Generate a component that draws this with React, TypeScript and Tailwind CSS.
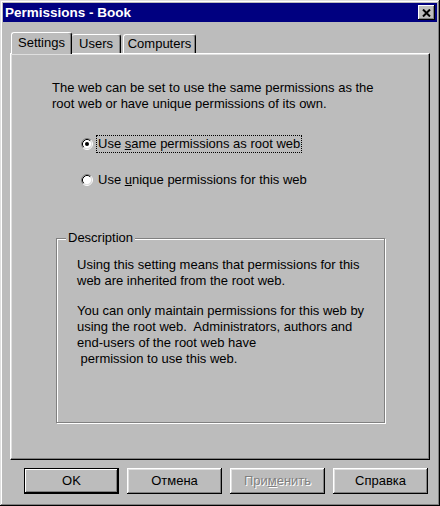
import React from "react";

const Radio = ({ checked }: { checked?: boolean }) => (
  <svg width="12" height="12" viewBox="0 0 12 12" className="shrink-0">
    <circle cx="6" cy="6" r="4.5" fill="#fff" />
    <path d="M2.11 9.89 A5.5 5.5 0 0 1 9.89 2.11" fill="none" stroke="#808080" />
    <path d="M9.89 2.11 A5.5 5.5 0 0 1 2.11 9.89" fill="none" stroke="#fff" />
    <path d="M2.82 9.18 A4.5 4.5 0 0 1 9.18 2.82" fill="none" stroke="#000" />
    <path d="M9.18 2.82 A4.5 4.5 0 0 1 2.82 9.18" fill="none" stroke="#dfdfdf" />
    {checked && <circle cx="6" cy="6" r="2" fill="#000" />}
  </svg>
);

const Btn = ({
  children,
  isDefault,
}: {
  children: React.ReactNode;
  isDefault?: boolean;
}) => (
  <div
    className={
      "flex h-[26px] w-[95px] items-center justify-center bg-[#bcbcbc] " +
      (isDefault
        ? "border border-black shadow-[inset_-1px_-1px_#000,inset_1px_1px_#fff,inset_-2px_-2px_#808080]"
        : "shadow-[inset_-1px_-1px_#000,inset_1px_1px_#fff,inset_-2px_-2px_#808080,inset_2px_2px_#dfdfdf]")
    }
  >
    {children}
  </div>
);

export default function App() {
  return (
    <div className="h-[506px] w-[440px] bg-[#bcbcbc] p-[3px] font-['Liberation_Sans',Arial,sans-serif] text-[13px] leading-[16px] text-black shadow-[inset_-1px_-1px_#000,inset_1px_1px_#dfdfdf,inset_-2px_-2px_#808080,inset_2px_2px_#fff]">
      {/* Title bar */}
      <div className="flex h-[19px] items-center justify-between bg-[#000080] pl-[2px] pr-[2px]">
        <span className="text-[13.5px] font-bold text-white">Permissions - Book</span>
        <div className="flex h-[15px] w-[17px] items-center justify-center bg-[#bcbcbc] shadow-[inset_-1px_-1px_#000,inset_1px_1px_#fff,inset_-2px_-2px_#808080]">
          <svg width="9" height="8" viewBox="0 0 9 8">
            <path d="M1 0.5 L8 7.5 M8 0.5 L1 7.5" stroke="#000" strokeWidth="2" />
          </svg>
        </div>
      </div>

      {/* Tabs */}
      <div className="relative z-10 ml-[8px] mt-[10px] flex h-[21px] items-end">
        <div className="-mb-px flex h-[22px] w-[61px] items-center justify-center rounded-t-[3px] border-l border-t border-r border-l-white border-t-white border-r-black bg-[#bcbcbc] pb-[2px] shadow-[inset_-1px_0_#808080]">
          Settings
        </div>
        <div className="flex h-[19px] w-[49px] items-center justify-center rounded-t-[3px] border-t border-r border-t-white border-r-black pb-[1px] shadow-[inset_-1px_0_#808080]">
          Users
        </div>
        <div className="ml-[2px] flex h-[19px] w-[73px] items-center justify-center rounded-t-[3px] border-l border-t border-r border-l-white border-t-white border-r-black pb-[1px] shadow-[inset_-1px_0_#808080]">
          Computers
        </div>
      </div>

      {/* Panel */}
      <div className="ml-[7px] h-[407px] w-[420px] border-l border-t border-r border-b border-l-white border-t-white border-r-black border-b-black pl-[41px] pt-[26px] shadow-[inset_-1px_-1px_#808080,inset_1px_1px_#dfdfdf]">
        <p>
          The web can be set to use the same permissions as the
          <br />
          root web or have unique permissions of its own.
        </p>

        <div className="ml-[29px] mt-[23px] flex items-center gap-[3px]">
          <Radio checked />
          <span className="border border-dotted border-black px-[1px]">
            Use <u>s</u>ame permissions as root web
          </span>
        </div>
        <div className="ml-[29px] mt-[19px] flex items-center gap-[4px]">
          <Radio />
          <span className="px-[1px]">
            Use <u>u</u>nique permissions for this web
          </span>
        </div>

        {/* Description group */}
        <div className="relative ml-[4px] mt-[50px] h-[185px] w-[329px] border border-[#808080] pl-[20px] pt-[18px] shadow-[inset_1px_1px_#fff,1px_1px_#fff]">
          <span className="absolute -top-[9px] left-[9px] bg-[#bcbcbc] px-[2px]">Description</span>
          <p>
            Using this setting means that permissions for this
            <br />
            web are inherited from the root web.
          </p>
          <p className="mt-[14px] whitespace-pre">
            {"You can only maintain permissions for this web by\nusing the root web.  Administrators, authors and\nend-users of the root web have\n permission to use this web."}
          </p>
        </div>
      </div>

      {/* Buttons */}
      <div className="ml-[21px] mt-[8px] flex gap-[8px]">
        <Btn isDefault>OK</Btn>
        <Btn>Отмена</Btn>
        <Btn>
          <span className="text-[#808080] [text-shadow:1px_1px_#fff]">
            При<u>м</u>енить
          </span>
        </Btn>
        <Btn>Справка</Btn>
      </div>
    </div>
  );
}
